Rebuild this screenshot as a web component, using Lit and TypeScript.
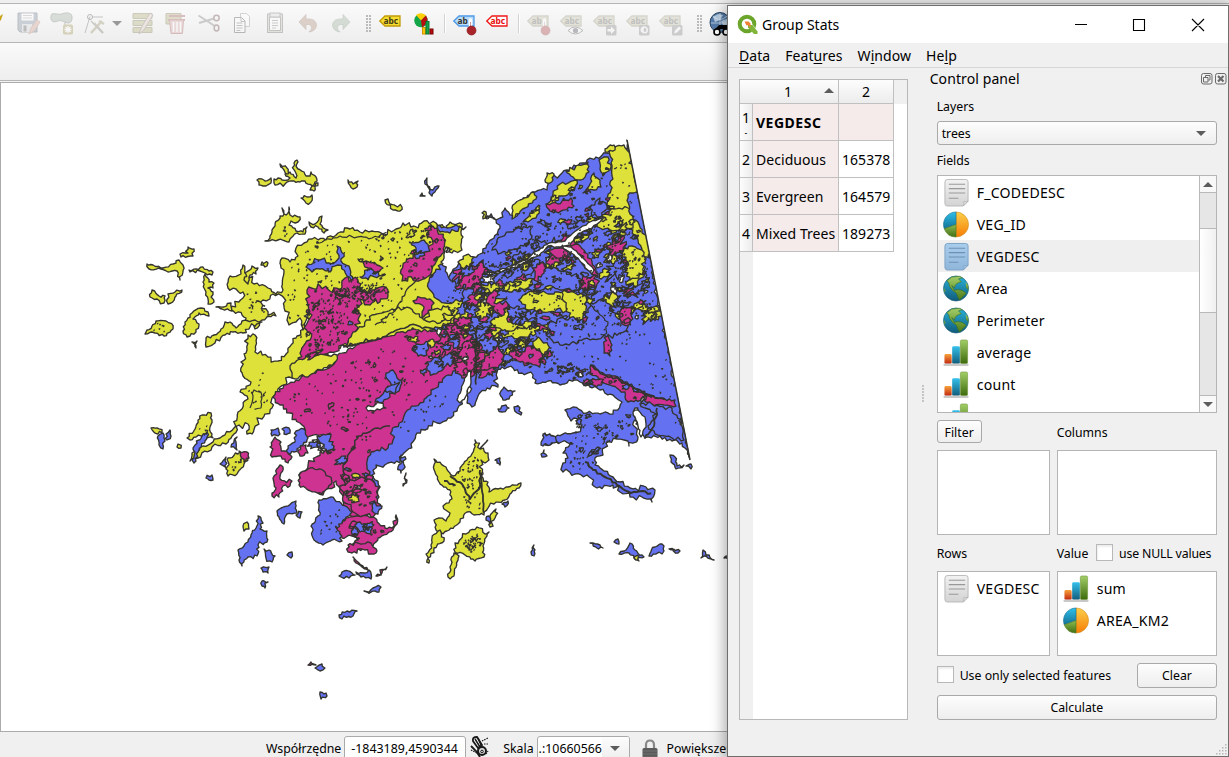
import { LitElement, html, svg, css } from "lit";
import { customElement } from "lit/decorators.js";

/* ---------- map geometry ---------- */
type Pt = [number, number];
const Y = "#dde139", B = "#6471f0", M = "#ce3391", W = "#ffffff";

function rng(seed: number) {
  let s = seed >>> 0;
  return () => {
    s = (s + 0x6d2b79f5) >>> 0;
    let t = s;
    t = Math.imul(t ^ (t >>> 15), t | 1);
    t ^= t + Math.imul(t ^ (t >>> 7), t | 61);
    return ((t ^ (t >>> 14)) >>> 0) / 4294967296;
  };
}
function pts(s: string): Pt[] {
  return s.trim().split(/\s+/).map((p) => p.split(",").map(Number) as Pt);
}
// Jagged coastline: every edge is split in short steps that wander off it.
function rough(s: string, amp = 2, step = 3, open = false): string {
  const p = pts(s);
  const r = rng(Math.round(p[0][0] * 31 + p[0][1] * 17 + p.length));
  const out: string[] = [];
  p.forEach((a, i) => {
    if (open && i === p.length - 1) return;
    const b = p[(i + 1) % p.length];
    const dx = b[0] - a[0], dy = b[1] - a[1];
    const len = Math.hypot(dx, dy) || 1;
    const n = Math.max(1, Math.round(len / step));
    for (let k = 0; k < n; k++) {
      const t = k / n + (k ? (r() - 0.5) * 0.5 / n : 0);
      const spike = r() < 0.14 ? 1.9 : 1;
      const j = k === 0 ? 0 : (r() - 0.5) * 2 * amp * spike;
      out.push(`${(a[0] + dx * t - (dy / len) * j).toFixed(1)},${(a[1] + dy * t + (dx / len) * j).toFixed(1)}`);
    }
  });
  return "M" + out.join("L") + (open ? "" : "Z");
}
function inside(x: number, y: number, p: Pt[]) {
  let c = false;
  for (let i = 0, j = p.length - 1; i < p.length; j = i++) {
    if (p[i][1] > y !== p[j][1] > y && x < ((p[j][0] - p[i][0]) * (y - p[i][1])) / (p[j][1] - p[i][1]) + p[i][0]) c = !c;
  }
  return c;
}
function blob(x: number, y: number, rx: number, ry: number, ang: number, r: () => number): string {
  const n = 7 + Math.floor(rx * 1.6);
  const ca = Math.cos(ang), sa = Math.sin(ang);
  const q: string[] = [];
  for (let i = 0; i < n; i++) {
    const a = (i / n) * Math.PI * 2, k = 0.4 + r() * 0.95;
    const u = Math.cos(a) * rx * k, v = Math.sin(a) * ry * k;
    q.push(`${(x + u * ca - v * sa).toFixed(1)},${(y + u * sa + v * ca).toFixed(1)}`);
  }
  return "M" + q.join("L") + "Z";
}
function bounds(p: Pt[]) {
  const xs = p.map((a) => a[0]), ys = p.map((a) => a[1]);
  return [Math.min(...xs), Math.max(...xs), Math.min(...ys), Math.max(...ys)];
}
function scatter(zone: string, count: number, colors: string, size: number, seed: number, flat = 0.42, tilt = -0.4) {
  const p = pts(zone), r = rng(seed);
  const [x0, x1, y0, y1] = bounds(p);
  const pal: Record<string, string> = { Y, B, M, W, N: "none" };
  const out = [];
  let guard = 0;
  while (out.length < count && guard++ < count * 30) {
    const x = x0 + r() * (x1 - x0), y = y0 + r() * (y1 - y0);
    if (!inside(x, y, p)) continue;
    const c = colors[Math.floor(r() * colors.length)];
    const sz = size * (0.3 + r() * r() * 1.6) * (c === "W" ? 0.6 : 1);
    out.push(svg`<path d=${blob(x, y, sz, sz * (flat + r() * 0.35), tilt + (r() - 0.5) * 1.3, r)} fill=${pal[c]}></path>`);
  }
  return out;
}
// Dark pinholes: tiny polygons that are mostly outline.
function specks(zone: string, count: number, seed: number) {
  const p = pts(zone), r = rng(seed);
  const [x0, x1, y0, y1] = bounds(p);
  let d = "";
  for (let i = 0; i < count; i++) {
    const x = x0 + r() * (x1 - x0), y = y0 + r() * (y1 - y0);
    if (inside(x, y, p)) d += `M${x.toFixed(1)},${y.toFixed(1)}l${(r() * 1.6).toFixed(1)},${(r() * 1.4 - 0.5).toFixed(1)}l-.6,.7z`;
  }
  return svg`<path d=${d} fill="#333" stroke-width="1.1"></path>`;
}

const YELLOW_MAIN =
  "296,248 304,243 312,239 326,240 338,233 347,228 360,232 372,231 384,235 396,229 403,223 414,226 424,221 436,223 447,229 450,222 462,224 463,237 462,250 452,253 446,247 441,262 448,285 462,300 470,318 445,328 420,325 380,338 345,346 312,352 337,356 334,363 318,371 302,376 289,377 280,387 272,398 272,408 262,419 257,418 252,434 247,434 248,424 239,425 234,434 226,444 212,447 198,458 190,461 192,453 203,446 220,438 234,428 238,412 248,399 240,392 251,382 243,376 241,362 247,350 248,335 255,335 255,352 268,357 278,361 288,352 296,338 303,329 310,320 309,310 303,330 300,318 289,325 285,311 284,298 273,294 263,300 258,301 268,315 276,316 262,320 255,329 246,318 238,312 231,310 243,298 243,292 228,288 230,276 241,274 243,265 247,274 254,284 268,288 276,294 283,290 284,272 281,268 282,258 290,262 298,256";
const BLUE_MAIN =
  "425,300 440,285 452,272 462,262 470,262 478,255 486,248 494,238 500,228 496,220 485,217 500,218 505,208 515,217 523,198 532,192 547,190 549,181 560,175 567,170 583,163 596,157 606,153 612,150 618,152 626,150 627,140 690,459 682,443 672,441 660,436 645,438 640,430 640,413 635,408 634,421 638,437 629,446 624,440 617,439 606,443 603,455 595,458 595,465 604,471 613,477 620,482 630,488 646,487 655,490 652,502 642,497 630,497 620,492 613,485 597,488 587,475 575,474 563,472 563,463 568,458 563,453 570,444 556,441 545,445 543,434 555,437 573,433 582,425 574,418 571,421 565,410 573,407 587,413 600,414 613,414 622,402 613,395 600,390 590,387 580,382 569,380 560,385 548,381 535,383 533,375 522,373 513,368 502,367 497,372 498,387 487,388 478,396 472,407 467,403 470,383 457,411 448,418 437,423 425,430 417,433 411,444 404,453 400,463 388,463 376,465 372,475 380,487 379,497 370,500 355,470 340,450 380,400 410,350";
const MAGENTA_MAIN =
  "273,397 280,405 290,413 300,423 308,437 324,436 330,433 326,445 320,452 306,470 299,475 302,484 312,489 323,495 336,481 343,500 351,516 360,517 371,512 378,508 373,498 376,490 370,472 367,466 371,452 377,450 388,448 393,440 392,431 399,423 410,409 420,403 436,388 448,375 461,370 471,377 480,362 492,354 480,344 466,341 446,337 434,331 410,325 383,336 350,348 337,356 332,366 310,374 296,380 284,385";
const NORTHWEST_MAGENTA =
  "307,290 318,284 330,291 342,287 345,278 358,280 362,292 372,290 385,287 383,297 370,305 360,300 358,320 354,332 348,345 330,352 318,355 305,360 298,358 310,340 306,325 312,315 308,305";

const PATCHES: [string, string][] = [
  [B, "306,267 318,260 334,263 339,258 337,246 344,254 341,261 350,269 353,280 347,276 338,265 330,272 320,269 312,272"],
  [M, "358,259 366,261 377,265 383,268 376,272 368,268"],
  [B, "360,277 367,270 378,271 382,276 368,279"],
  [M, "401,270 406,262 416,254 425,252 433,244 427,233 430,227 437,228 445,240 444,252 436,262 430,275 419,281 408,277 402,281"],
  [B, "411,243 424,240 430,251 422,255 416,248"],
  [B, "428,283 433,274 441,264 448,276 456,284 464,290 462,300 445,303 434,297"],
  [B, "437,226 447,228 456,225 466,227 450,233 440,232"],
  [M, "371,295 378,292 386,287 388,296 380,302 373,301"],
  [M, "413,301 425,298 434,303 425,315 417,320 424,307"],
  [Y, "345,346 353,332 362,327 372,315 392,309 410,308 424,320 442,312 455,310 450,324 430,330 400,332 372,340"],
  [Y, "307,356 326,355 337,355 334,363 316,371 308,377 292,378 290,366"],
  [Y, "610,149 624,145 629,152 641,200 648,230 650,258 642,254 638,240 628,226 616,214 607,205 611,190 612,168"],
  [Y, "599,160 608,157 610,170 603,176 600,169"],
  [Y, "566,171 578,165 588,162 589,172 581,180 571,176"],
  [Y, "547,204 553,194 560,184 577,180 574,190 562,196 553,205"],
  [Y, "594,173 600,180 601,187 594,190 583,193 590,184"],
  [Y, "512,208 520,200 529,196 534,192 536,199 525,208 516,214 512,219"],
  [Y, "523,222 530,213 539,209 536,218 528,222"],
  [B, "386,373 393,370 399,380 403,378 400,388 390,397 380,403 375,402 384,392 392,387"],
  [B, "412,350 417,344 429,342 427,355 418,356"],
  [B, "385,391 392,385 400,382 395,394"],
  [W, "366,408 381,403 386,408 377,409 368,411"],
  [W, "318,450 327,441 331,446 323,452"],
  [M, "340,486 352,480 368,479 379,487 376,497 380,508 371,517 358,515 345,503"],
];
// Larger pieces that sit on top of the small mosaic.
const OVER: [string, string][] = [
  [Y, "597,224 605,214 614,209 628,208 634,214 633,228 624,232 610,230 600,228"],
  [M, "546,204 558,204 565,200 571,198 574,206 561,211 550,211"],
  [B, "628,195 636,192 641,200 648,236 642,233 638,222 630,214"],
  [B, "497,240 510,232 530,226 532,236 524,246 512,250 498,254 492,250"],
  [B, "590,208 600,198 607,206 602,216 592,216"],
  [Y, "519,300 526,294 534,291 546,293 554,294 558,292 572,298 583,302 584,308 566,311 557,309 542,312 528,310"],
  [Y, "562,292 575,293 586,296 586,312 580,322 570,318 566,306"],
  [Y, "620,252 632,246 642,250 645,262 643,275 630,280 624,272 628,262"],
  [Y, "490,322 500,315 509,308 508,322 518,325 530,326 538,330 528,335 512,336 502,330"],
  [B, "525,276 540,268 556,268 570,274 582,280 578,290 560,290 548,286 532,292 524,286"],
  [B, "548,325 560,318 585,320 590,303 606,300 612,312 628,324 628,332 560,345 550,338"],
  [M, "566,245 578,244 584,250 592,262 598,277 588,270 574,252"],
  [M, "548,250 560,248 568,252 564,260 554,256"],
  [M, "486,302 494,290 498,295 494,303 508,304 504,315 496,312"],
  [M, "617,314 624,307 634,311 630,324 624,325"],
  [M, "455,287 463,277 474,272 482,262 487,268 480,282 466,290"],
  [M, "533,268 542,262 546,268 541,277 534,280"],
  [Y, "458,262 466,255 474,257 470,267 461,267"],
  [Y, "424,319 435,309 448,306 452,316 440,323"],
  [Y, "503,285 518,280 534,279 530,286 512,292 503,291"],
  [M, "480,368 490,352 500,343 503,358 498,368 485,370"],
  [M, "509,355 514,346 522,352 528,346 540,350 546,362 536,365 520,362"],
  [Y, "533,345 538,337 548,345 547,356 540,351"],
  [Y, "500,332 520,328 540,326 536,334 520,337 503,338"],
  [M, "454,368 458,358 462,345 470,340 477,352 472,370 462,378"],
  [B, "480,340 494,336 498,344 490,352 481,350"],
  [B, "427,362 440,356 444,368 434,374 427,370"],
  [M, "591,365 598,370 606,375 615,376 627,382 640,392 655,398 675,400 676,406 664,405 646,402 636,400 628,402 625,392 610,385 600,380 590,374"],
  [M, "604,345 608,336 612,345 610,356 604,353"],
  [B, "640,404 652,404 672,408 680,424 684,440 672,438 655,434 648,426 656,414"],
];

const ISLANDS: [string, string][] = [
  // north-west
  [Y, "257,180 262,179 265,181 271,178 271,183 266,186 263,186 259,185"],
  [Y, "280,164 287,168 290,174 286,174 284,170"],
  [Y, "274,179 278,178 282,180 290,178 285,174 290,172 296,178 294,163 297,160 298,169 304,172 306,176 310,176 311,172 316,177 317,181 312,186 305,181 300,182 294,181 285,184 275,185"],
  [Y, "310,190 312,186 318,183 314,191"],
  [Y, "301,198 307,197 312,195 311,202 306,203"],
  [Y, "348,180 353,184 358,181 357,187 353,189"],
  [Y, "385,200 388,199 390,204 396,206 402,207 400,211 393,210"],
  [Y, "420,196 422,193 425,196"],
  [B, "425,184 427,178 428,186 433,190 437,186 439,186 436,190 432,196 430,190"],
  [Y, "265,241 270,238 272,232 275,226 280,216 284,214 282,208 286,215 289,207 290,215 300,217 298,222 291,221 289,225 296,231 303,232 307,227 305,234 297,233 290,239 289,242 278,240"],
  [Y, "309,222 315,224 319,218 322,216 320,224 328,230 324,233 318,227 311,227"],
  [Y, "180,254 188,253 188,247 194,249 193,256 181,257"],
  [Y, "147,264 153,265 163,268 173,264 179,260 183,265 180,280 177,271 168,272 161,269 149,269"],
  [Y, "189,270 196,269 203,267 209,271 213,272 212,275 205,273 200,271 190,272"],
  [Y, "205,274 209,282 214,283 213,288 208,288 213,292 214,302 208,304 206,292 203,282"],
  [Y, "150,297 152,290 159,296 165,296 164,303 157,299"],
  [Y, "168,304 168,294 175,292 182,290 176,296 171,303"],
  [Y, "147,330 152,326 156,321 166,321 173,329 164,336 155,333 145,334"],
  [Y, "183,331 185,322 192,313 201,308 208,312 209,316 199,313 193,319 199,324 196,332 187,337"],
  [Y, "216,307 224,307 231,303 232,311 222,309"],
  [Y, "206,338 214,335 221,329 225,322 230,322 236,328 242,321 255,320 262,322 250,327 243,333 233,332 225,335 215,343 206,347"],
  [Y, "192,342 197,341 196,348"],
  [Y, "252,266 258,268 256,274 250,275 248,284 244,280"],
  [Y, "261,265 262,262 268,263 267,266"],
  // west coast
  [Y, "151,428 157,428 162,433 158,434"],
  [B, "158,436 163,433 165,441 163,449 159,445"],
  [B, "166,434 170,430 171,436 167,440"],
  [Y, "178,444 177,447 181,448"],
  [Y, "187,438 195,429 198,420 202,415 211,413 212,420 210,427 213,438 204,436 196,437 190,440"],
  [B, "192,460 195,445 202,436 207,432 205,441 199,450 194,463"],
  [Y, "226,469 228,458 240,452 248,458 244,464 237,474 228,476"],
  [B, "220,464 226,457 226,468"],
  [B, "231,447 237,437 237,450"],
  [B, "206,478 212,475 213,480 209,480"],
  [M, "239,451 247,452 249,458 244,462"],
  [B, "271,430 278,428 280,434 272,436"],
  [B, "282,429 289,428 290,433 284,434"],
  [B, "296,431 304,429 308,438 303,445 294,452 285,454 288,446 295,442"],
  [M, "270,447 275,437 281,442 281,448 292,457 288,463 281,456 272,457"],
  [M, "298,450 306,445 308,453 300,456"],
  [M, "273,478 280,465 283,467 280,479 292,481 290,486 283,486 279,497 272,496 276,488"],
  [M, "299,475 310,468 324,471 332,482 322,494 308,490 299,485"],
  [B, "317,436 328,434 334,446 328,454"],
  [B, "277,511 288,506 296,501 297,513 287,514 284,524 279,517"],
  [B, "296,515 302,512 300,518"],
  [B, "311,526 320,515 319,500 331,497 341,503 352,512 343,520 342,541 332,540 323,545 314,540"],
  [B, "246,543 252,533 256,528 258,516 261,518 260,529 267,531 267,542 258,545 257,556 248,557 242,566 239,560 238,550 244,546"],
  [Y, "243,526 247,522 249,529 244,531"],
  [B, "264,549 269,550 275,556 272,562 266,558"],
  [B, "261,568 269,567 268,573 263,572"],
  [B, "262,581 268,582 265,588 262,586"],
  [B, "287,555 292,552 291,558"],
  [M, "337,528 346,518 356,516 368,516 375,518 385,528 392,528 396,515 397,524 393,530 378,538 373,546 363,549 350,552 349,545 358,540 352,536 342,538"],
  [M, "348,545 358,543 371,543 377,551 371,554 360,549 352,553 348,552"],
  [B, "353,526 360,522 370,527 371,533 360,532"],
  [B, "373,503 382,506 378,514 372,511"],
  [M, "353,557 359,563 368,570 362,567 356,563"],
  [B, "339,576 344,571 352,573 355,575 349,578 341,577"],
  [B, "356,572 364,573 369,570 371,579 361,577"],
  [M, "376,576 387,567 382,573 378,576"],
  [B, "364,591 373,588 381,587 379,592 367,592"],
  [B, "339,615 347,611 357,611 353,616 342,619"],
  [M, "308,665 311,662 316,665"], [B, "315,668 322,664 325,668 320,671"],
  [B, "320,692 326,693 327,696 321,699"],
  [B, "398,467 402,462 401,455 406,459 401,473"],
  [B, "403,486 406,473 407,480"],
  // south island
  [Y, "434,459 446,467 453,476 460,468 467,460 474,449 475,440 480,449 488,453 489,460 485,463 481,460 483,478 488,482 489,492 498,489 508,487 521,483 519,488 510,494 505,500 494,504 488,508 484,515 474,515 467,512 460,522 447,531 438,532 434,520 439,518 446,521 450,513 443,506 452,499 450,490 439,482 435,472"],
  [Y, "432,538 440,530 444,541 434,548 429,563 427,560 431,545"],
  [Y, "455,543 466,534 477,527 485,534 489,532 483,546 484,557 475,561 465,555 455,552"],
  [Y, "454,553 459,556 454,576 448,577 450,567"],
  [Y, "489,520 496,509 495,518 490,527"],
  [B, "486,518 489,516 490,524"],
  [B, "502,504 508,501 505,507"],
  [B, "495,460 500,458 500,465 497,463"],
  [B, "501,391 504,387 508,391 515,391 509,399 503,400"],
  [B, "498,409 506,405 509,408 502,412"],
  [B, "514,407 520,408 521,415 517,413"],
  [B, "541,454 544,450 547,456 542,457"],
  [B, "541,445 545,433 553,436 559,443"],
  [B, "670,455 675,457 677,466 684,465 676,469 671,462"],
  [B, "686,466 691,464 691,469"],
  [B, "531,552 534,545 534,556"],
  [B, "590,543 600,545 603,548 597,548"],
  [B, "614,542 618,539 619,544"],
  [B, "619,554 626,550 630,543 635,550 644,557 636,560 629,553"],
  [Y, "634,557 638,555 639,561"],
  [B, "649,556 655,547 662,544 664,551"],
  [B, "669,549 680,551 678,553"],
  [B, "701,558 703,550 706,555 714,560"],
  [B, "724,558 729,556 729,560"],
  [Y, "545,180 547,173 554,174 553,180 547,183"],
  [Y, "482,213 486,212 487,219 483,219"],
  [Y, "605,149 608,147 614,145 615,150 608,152"],
];

const MOSAIC = "440,326 446,300 470,266 498,254 520,248 545,232 565,215 590,205 622,215 645,255 655,300 660,320 630,326 600,325 565,330 550,345 566,360 600,370 560,377 510,362 480,375 452,372";
const EAST_BODY = "505,222 530,205 565,182 620,155 645,260 682,430 640,400 580,375 510,360 460,370 450,310 470,268";

function path(c: string, d: string, amp = 1.6, step = 3) {
  return svg`<path d=${rough(d, amp, step)} fill=${c}></path>`;
}
function seam(d: string, w = 1.3, amp = 1.3) {
  return svg`<path d=${rough(d, amp, 3, true)} fill="none" stroke-width=${w}></path>`;
}
const mapArt = svg`
  <defs><clipPath id="tile"><path d="M0,83H615L627,139L691,463V731H0Z"></path></clipPath></defs>
  <g stroke="#34342f" stroke-width="1.35" stroke-linejoin="round">
    <g clip-path="url(#tile)">
      ${path(B, BLUE_MAIN, 2.1, 2.8)}
      ${path(Y, YELLOW_MAIN, 2, 2.8)}
      ${path(M, NORTHWEST_MAGENTA, 2.6, 2.8)}
      ${path(M, MAGENTA_MAIN, 2, 2.8)}
      ${PATCHES.map(([c, d]) => path(c, d, 1.7, 2.8))}
      ${scatter("450,370 440,330 470,300 500,305 540,315 600,322 590,330 545,335 550,360 500,362 480,372", 95, "MMMYBBYWN", 8, 11)}
      ${scatter("462,266 500,254 545,235 600,232 645,262 655,318 610,320 560,290 520,292 490,300 465,300", 120, "MBBYMYNBWY", 8, 23)}
      ${scatter("505,222 545,212 590,195 612,200 618,240 560,240 520,245", 34, "MBNNY", 5, 31)}
      ${OVER.map(([c, d]) => path(c, d, 1.8, 2.8))}
      ${scatter(MOSAIC, 130, "MBYWMNYM", 3.6, 37)}
      ${scatter("545,350 600,372 630,385 655,398 640,402 600,385 545,372", 26, "BMNWB", 3.8, 41)}
      ${scatter("410,328 450,332 480,345 470,370 440,380 415,375", 24, "BBNYW", 5, 47)}
      ${scatter("308,290 385,285 370,305 345,345 305,358", 36, "NNMWBY", 3.2, 53)}
      ${scatter("430,225 446,235 452,250 430,280 405,280 405,262", 20, "NWMB", 3.4, 59)}
      ${scatter("285,262 304,245 350,232 420,226 460,230 425,260 400,300 320,280", 14, "NWY", 3, 61)}
      ${scatter("290,395 330,370 420,330 440,350 400,410 340,440", 24, "NNWM", 2.6, 67)}
      ${scatter("340,450 370,440 375,480 378,510 345,500", 18, "NMBWY", 3.5, 71)}
      ${scatter("302,440 330,434 340,455 315,455", 12, "YBMW", 4, 73)}
      ${scatter("572,415 620,418 640,405 640,440 600,450 570,465", 20, "NBN", 3, 79)}
      ${scatter("600,205 645,212 645,270 610,232", 14, "NNYBW", 4, 83)}
      ${scatter("520,212 600,170 612,158 614,200 560,215", 18, "NBYM", 3.5, 89)}
      ${path(W, "485,274 497,271 510,266 525,260 540,249 549,243 565,241 570,236 580,228 590,222 604,218 592,228 578,234 570,245 560,247 548,246 541,253 524,263 510,269 498,274", 0.8)}
      ${path(W, "562,246 571,247 583,258 594,270 592,274 578,258", 0.6)}
      ${path(W, "470,370 471,383 466,396 460,403 457,400 463,384", 1.3)}
      ${path(W, "638,410 645,417 646,427 641,437 636,420 633,412", 1)}
      ${seam("585,462 593,470 605,477 617,485 631,493 643,491 653,496", 2)}
      ${seam("476,328 476,388", 1.7, 0.5)}
      ${seam("657,408 654,426 642,441", 1.8, 0.7)}
      ${seam("590,365 605,375 625,383 647,394 667,400", 1.8, 1.2)}
      ${seam("343,347 383,337 410,325 440,331", 1.6)}
      ${seam("345,486 343,466 352,450 358,436 372,430 392,425", 1.5)}
      ${seam("375,325 395,311 409,287 420,275", 1.3)}
      ${seam("590,305 598,312 608,322 604,335 598,332", 1.2)}
      ${seam("316,243 340,236 372,238 390,232", 1.2)}
      ${seam("250,408 254,390 262,396 261,408 252,410", 1.2)}
      ${specks("288,272 304,248 350,236 440,228 445,255 400,320 300,340 286,320", 240, 101)}
      ${specks("282,395 330,370 420,332 460,350 440,385 400,410 370,450 330,432 300,418", 230, 103)}
      ${specks(MOSAIC, 520, 107)}
      ${specks(EAST_BODY, 380, 109)}
      ${specks("330,290 380,282 368,300 340,298", 200, 113)}
      ${specks("480,272 500,262 530,252 545,245 540,255 510,272 490,280", 300, 127)}
      ${specks("575,424 620,420 630,416 622,436 600,445 590,470 568,468 574,450", 130, 131)}
      ${specks("612,155 625,152 648,255 612,240", 30, 137)}
      ${specks("312,300 350,295 340,345 312,352", 130, 139)}
      ${specks("385,450 400,420 450,385 466,376 455,402 410,430", 60, 149)}
    </g>
    <path d="M627,140L690,460" fill="none" stroke-width="1.5"></path>
    ${ISLANDS.map(([c, d]) => path(c, d, 1.4, 2.4))}
    ${scatter("342,524 372,520 384,532 360,542", 14, "NBMM", 3, 151)}
    ${scatter("344,490 370,482 374,506 355,512", 14, "NBWM", 3.2, 157)}
    ${seam("450,476 462,484 470,499 480,487 481,469", 2, 0.8)}
    ${seam("480,470 483,495 484,515", 1.8, 0.6)}
    ${seam("444,481 455,485 450,487", 1.8)}
    ${seam("480,449 490,437", 1.6, 0.5)}
    ${specks("458,472 478,454 481,510 466,508", 70, 163)}
    ${specks("462,542 478,533 482,544 470,553", 110, 167)}
    ${specks("320,520 340,507 338,536 320,536", 16, 173)}
    ${specks("248,385 266,364 268,400 252,412", 24, 179)}
    ${specks("244,290 262,292 264,312 248,312", 22, 181)}
    ${specks("276,236 282,222 290,236", 14, 183)}
    ${specks("230,470 234,458 243,458 236,470", 16, 187)}
    ${specks("150,330 158,323 166,325 164,332", 10, 191)}
    ${specks("196,434 203,420 209,424 206,434", 10, 193)}
  </g>`;

/* ---------- icons ---------- */
const doc = (sel = false) => svg`
  <svg class="ic" viewBox="0 0 28 30">
    <defs><linearGradient id=${sel ? "dgs" : "dg"} x2="0" y2="1"><stop offset="0" stop-color=${sel ? "#a9cdec" : "#f2f2f2"}></stop><stop offset="1" stop-color=${sel ? "#8fb6da" : "#d3d3d3"}></stop></linearGradient></defs>
    <path d="M5,1.500H23.500Q26,1.500 26,4V24L21,29H4.500Q2,29 2,26.500V4Q2,1.500 5,1.500Z" fill=${sel ? "url(#dgs)" : "url(#dg)"} stroke=${sel ? "#7da2c6" : "#b9b9b9"}></path>
    <path d="M26,24L21,29Q22.500,27 21.500,24.500Q24,25.200 26,24Z" fill=${sel ? "#a9cdec" : "#efefef"} stroke=${sel ? "#7da2c6" : "#adadad"} stroke-width=".8"></path>
    <path d="M6,6.500H23M6,11H23M6,15.500H23M6,21H16" stroke=${sel ? "#6d91b4" : "#999"} stroke-width="1.100"></path>
  </svg>`;
const pie = svg`
  <svg class="ic" viewBox="0 0 28 30">
    <defs>
      <linearGradient id="po" x2="0" y2="1"><stop offset="0" stop-color="#fcd04b"></stop><stop offset="1" stop-color="#f67d04"></stop></linearGradient>
      <linearGradient id="pb" x2="0" y2="1"><stop offset="0" stop-color="#2cc0ea"></stop><stop offset="1" stop-color="#157096"></stop></linearGradient>
      <linearGradient id="pg" x2="0" y2="1"><stop offset="0" stop-color="#8dbc50"></stop><stop offset="1" stop-color="#416e12"></stop></linearGradient>
    </defs>
    <path d="M13.500,15V2A13,13 0 0 1 13.500,28Z" fill="url(#po)" stroke="#cf8a22" stroke-width=".6"></path>
    <path d="M13.500,15L1.300,19.500A13,13 0 0 1 13.500,2Z" fill="url(#pb)" stroke="#1b6f93" stroke-width=".6"></path>
    <path d="M13.500,15V28A13,13 0 0 1 1.300,19.500Z" fill="url(#pg)" stroke="#4c7a1e" stroke-width=".6"></path>
  </svg>`;
const globe = svg`
  <svg class="ic" viewBox="0 0 28 30">
    <defs>
      <linearGradient id="gb" x2="0" y2="1"><stop offset="0" stop-color="#29b3dc"></stop><stop offset="1" stop-color="#105a78"></stop></linearGradient>
      <linearGradient id="gg" x2="0" y2="1"><stop offset="0" stop-color="#a3cf69"></stop><stop offset="1" stop-color="#4a7a17"></stop></linearGradient>
    </defs>
    <circle cx="13.500" cy="15" r="13" fill="url(#gb)" stroke="#19607d" stroke-width=".7"></circle>
    <path d="M4,7L9,3.200L17,2.300L20,4L16,5L19,8L16,9L13,11L12,14L9,12L12,17L15,16L20,17L24,20L20,24L17,27L15.500,24L14,20L10,17L7,13L6,9Z" fill="url(#gg)" stroke="#3e6b18" stroke-width=".6"></path>
    <path d="M23.500,8L26,12L26.500,17L24,14Z" fill="url(#gg)"></path><path d="M.8,14L2.600,17L1.800,20Z" fill="#6f9f38"></path>
  </svg>`;
const bars = svg`
  <svg class="ic" viewBox="0 0 28 30">
    <defs>
      <linearGradient id="br" x2="0" y2="1"><stop offset="0" stop-color="#f9a33c"></stop><stop offset="1" stop-color="#c22a10"></stop></linearGradient>
      <linearGradient id="bb" x2="0" y2="1"><stop offset="0" stop-color="#35c1ec"></stop><stop offset="1" stop-color="#125d7c"></stop></linearGradient>
      <linearGradient id="bg" x2="0" y2="1"><stop offset="0" stop-color="#a2cf66"></stop><stop offset="1" stop-color="#3d6b0d"></stop></linearGradient>
    </defs>
    <rect x=".5" y="26.500" width="26" height="2.500" rx="1" fill="#c9c9c9"></rect>
    <rect x="1.500" y="16.500" width="7.500" height="10" rx="1.500" fill="url(#br)"></rect>
    <rect x="9.500" y="8.500" width="8" height="18" rx="1.500" fill="url(#bb)"></rect>
    <rect x="18" y="2" width="7.500" height="24.500" rx="1.500" fill="url(#bg)" stroke="#6f963b" stroke-width=".6"></rect>
  </svg>`;

const tag = (txt: string, fill: string, line: string, ink: string) => svg`
  <path d="M.8,9L6,4H21V14H6Z" fill=${fill} stroke=${line} stroke-width="1.300"></path>
  <text x="4.400" y="11.900" font-size="8.400" font-weight="700" font-family="Noto Sans, sans-serif" fill=${ink}>${txt}</text>`;
const thermo = svg`<path d="M17.500,8V18" stroke="#fff" stroke-width="3.400" stroke-linecap="round"></path><path d="M17.500,10V18" stroke="#c99" stroke-width="1"></path><circle cx="18.500" cy="18.500" r="4.500" fill="#a8242a" stroke="#861c20" stroke-width=".7"></circle>`;
const box = (inner: unknown) => svg`<rect x="13" y="13" width="10.500" height="10.500" rx="1.500" fill="#777"></rect>${inner}`;
const t = (inner: unknown, cls = "ti") => html`<svg class=${cls} viewBox="0 0 24 24" fill="none">${inner}</svg>`;

const TOOLS = {
  save: svg`<path d="M1,1H20V20H3L1,18Z" fill="#8794a5" stroke="#5d6875"></path><rect x="4.500" y="1.500" width="12" height="7" fill="#fff"></rect><path d="M6,3.500h9M6,6h9" stroke="#aaa"></path><rect x="5" y="12" width="10" height="8" fill="#d3d7da"></rect><rect x="6.500" y="13.500" width="3" height="6" fill="#666"></rect><path d="M12,22l2,-6l6,-8l3,2l-6,9Z" fill="#d8a595" stroke="#b78b7c"></path>`,
  poly: svg`<path d="M1,7Q0,0 6,2Q11,3 15,1Q23,0 22,7Q21,13 15,10Q10,7 6,9.500Q2,11 1,7Z" fill="#a9b5aa" stroke="#7b877c"></path><path d="M15,10v4" stroke="#777"></path><rect x="13" y="12.500" width="10" height="10" rx="1.500" fill="#a99f63"></rect><path d="M18,14v7M14.500,17.500h7M15.500,15l5,5M20.500,15l-5,5" stroke="#fff" stroke-width="1.300"></path>`,
  vertex: svg`<path d="M7,4.500L2,21M9,5H20" stroke="#777"></path><circle cx="7" cy="5" r="2.500" stroke="#555"></circle><path d="M8,21L19,9M11,11l9,10M16,9l5,3" stroke="#a39c76" stroke-width="2.500"></path><path d="M8,9l12,12" stroke="#888" stroke-width="1.500"></path>`,
  table: svg`<path d="M1,1.500H20V6.500H1ZM1,8.500H20V13.500H1ZM1,15.500H20V20.500H1Z" fill="#b6b47f" stroke="#87855d"></path><path d="M7,22l2,-6l9,-15l3,2l-9,15Z" fill="#ddcbc3" stroke="#907e74"></path>`,
  trash: svg`<path d="M1,1.500H16V12H1Z" fill="#b6b47f" stroke="#87855d"></path><path d="M4,4H20M3,8H20" stroke="#a66" stroke-width="2"></path><path d="M4.500,8H18.500L17.500,21.500H6Z" fill="#d9acac" stroke="#a66"></path><path d="M8.500,10v10M12,10v10M15.500,10v10" stroke="#fff" stroke-width="1.500"></path>`,
  cut: svg`<path d="M0.500,3.500L16,13.500M1,11L16,6.500" stroke="#888" stroke-width="2"></path><circle cx="18.500" cy="6" r="2.700" stroke="#755" stroke-width="1.500"></circle><ellipse cx="18.500" cy="16" rx="2.300" ry="3" stroke="#755" stroke-width="1.500"></ellipse>`,
  copy: svg`<path d="M9.500,1.500h6l3,3v10h-9Z" fill="#fff" stroke="#999"></path><path d="M3.500,5.500h7l3.500,3.500v11.500h-10.500Z" fill="#fff" stroke="#555"></path><path d="M10,5.500v4h4M5.500,11h6M5.500,13.500h6M5.500,16h6M5.500,18.500h4" stroke="#777"></path>`,
  paste: svg`<rect x="3.500" y="2" width="15" height="18.500" fill="#cfcbb6" stroke="#777"></rect><path d="M5.500,5h11v13.500h-11Z" fill="#fff" stroke="#777"></path><rect x="6" y="1" width="10" height="4" fill="#ddd" stroke="#777"></rect><path d="M8,8.500h6M8,11h6M8,13.500h6M8,16h4" stroke="#888"></path>`,
  undo: svg`<path d="M2,10L9,2.500V7Q19,6 19.500,13Q19,19 12,20Q16,17 14,13.500Q12,12 9,12.500V17.500Z" fill="#b59684" stroke="#93776a" stroke-width=".7"></path>`,
  redo: svg`<path d="M20,10L13,2.500V7Q3,6 2.500,13Q3,19 10,20Q6,17 8,13.500Q10,12 13,12.500V17.500Z" fill="#a3b5a2" stroke="#7b917b" stroke-width=".7"></path>`,
  charts: svg`<circle cx="9" cy="8.500" r="6.800" fill="#12a54a"></circle><path d="M9,8.500L4,3Q9,-.5 14,3.500Z" fill="#ffce05"></path><path d="M9,8.500L14,3.500Q18,9.500 10,15.500Z" fill="#b90d10"></path><rect x="10.500" y="15.500" width="3" height="6.500" fill="#f8c808" stroke="#d48f00"></rect><rect x="14" y="9.500" width="3" height="12.500" fill="#12a54a" stroke="#0a7434"></rect><rect x="18" y="17" width="3" height="5" fill="#b90d10" stroke="#790000"></rect>`,
};
const grey = (x: string) => tag(x, "#bcb998", "#908e76", "#444");

type Icon = "doc" | "docsel" | "pie" | "globe" | "bars";
const ICONS: Record<Icon, unknown> = { doc: doc(), docsel: doc(true), pie, globe, bars };
const item = (icon: Icon, label: string) => html`
  <div class="item ${icon === "docsel" ? "sel" : ""}">${ICONS[icon]}<span>${label}</span></div>`;

@customElement("app-root")
export class AppRoot extends LitElement {
  static styles = css`
    :host { display: block; width: 1229px; height: 757px; position: relative; overflow: hidden; background: #f0f0f0; color: #000;
      font: 12.3px/16px "Noto Sans", "Open Sans", sans-serif; }
    * { box-sizing: border-box; }
    svg { display: block; flex: none; }
    .main { display: flex; flex-direction: column; height: 757px; }
    .menuedge { height: 4px; border-bottom: 1px solid #b5b5b5; background: #efefef; }
    .bar { height: 39px; border-bottom: 1px solid #b5b5b5; background: linear-gradient(#fafafa, #eeeeee); display: flex; align-items: center; gap: 9px; padding: 1px 0 0 17px; overflow: hidden; }
    .pencil { width: 4px; height: 8px; margin: -12px 4px 0 -17px; }
    .bar.second { height: 38px; }
    .ti { width: 24px; height: 24px; }
    .off { width: 24px; height: 24px; opacity: .38; }
    .pale { opacity: .3; }
    .tri { width: 0; height: 0; border: 5px solid transparent; border-top-color: #999; border-bottom: 0; margin: 0 1px 0 -4px; flex: none; }
    .grip { width: 5px; height: 18px; flex: none; background-image: radial-gradient(circle at 1px 1px, #bbb 0.8px, transparent 1px); background-size: 3px 3px; margin: 0 -1px 0 3px; }
    .grip.last { margin: 0 -2px 0 5px; }
    .sep { width: 2px; height: 19px; background: #d2d2d2; border-right: 1px solid #fff; margin: 0 -2px 0 -1px; flex: none; }
    .gap { height: 1px; background: #f4f4f4; }
    .map { flex: 1; border: 1px solid #ababab; background: #fff; min-height: 0; overflow: hidden; }
    .status { height: 25px; display: flex; align-items: flex-start; padding: 4px 0 0 266px; white-space: nowrap; overflow: hidden; }
    .status .lab { padding-top: 5px; }
    .edit { height: 26px; border: 1px solid #aaa; border-radius: 3px; background: #fff; padding: 4px 6px; margin-left: 3px; width: 122px; font-size: 12.400px; }
    .compass { margin-left: 4px; }
    .scale { margin-left: 13px; }
    .lock { margin: 3px 0 0 12px; }
    .zoomlab { margin-left: 9px; }
    .combo2 { height: 26px; width: 93px; border: 1px solid #aaa; border-radius: 3px; background: #fff; display: flex; margin-left: 3px; padding: 4px 0 0 1px; font-size: 12.400px; overflow: hidden; }
    .combo2 i { width: 27px; margin-top: -4px; height: 26px; margin-left: auto; background: linear-gradient(#fcfcfc, #ececec); display: flex; justify-content: center; padding-top: 9px; }
    .dn { width: 0; height: 0; border: 5px solid transparent; border-top: 5px solid #5c5c5c; border-bottom: 0; }
    .up { width: 0; height: 0; border: 5px solid transparent; border-bottom: 5px solid #5c5c5c; border-top: 0; }

    .win { position: absolute; left: 727px; top: 5px; width: 502px; height: 752px; border: 1px solid #6e6e6e; background: #f0f0f0; box-shadow: 0 2px 14px 2px rgba(0,0,0,.36); display: flex; flex-direction: column; font-size: 14px; line-height: 20px; }
    .title { height: 37px; background: #fff; display: flex; align-items: center; padding-left: 9px; }
    .title .t { margin-left: 4px; letter-spacing: -.02px; flex: 1; }
    .title .ctl { margin-right: 23px; }
    .menus { height: 25px; border-bottom: 1px solid #d6d6d6; display: flex; gap: 15px; padding: 3px 0 0 11px; letter-spacing: .06px; }
    .menus u { text-decoration-thickness: 1px; text-underline-offset: 2px; }
    .body { flex: 1; display: flex; min-height: 0; }
    .table { width: 169px; height: 641px; margin: 11px 0 0 11px; border: 1px solid #b8b8b8; background: #fff; display: grid; grid-template-columns: 13px 86px 55px 1fr; grid-template-rows: 24px repeat(4, 37px) 1fr; }
    .table > div { border-right: 1px solid #c0c0c0; border-bottom: 1px solid #c0c0c0; display: flex; align-items: center; padding: 2px 0 0 3px; white-space: nowrap; letter-spacing: .05px; }
    .table .h { background: linear-gradient(#fdfdfd, #ececec); justify-content: center; padding: 1px 0 0; }
    .table .h1 { grid-column: span 2; position: relative; padding-right: 2px; }
    .table .h1 .up { position: absolute; right: 4px; top: 8px; }
    .table .e { background: #f0f0f0; border: 0; }
    .table .b { border: 0; }
    .table .r { background: linear-gradient(90deg, #fdfdfd, #ececec); padding: 2px 0 0; justify-content: center; }
    .table .r.first { flex-direction: column; justify-content: flex-start; padding-top: 6px; line-height: 16px; }
    .table .r.first small { font-size: 7px; line-height: 13px; font-weight: 700; }
    .table .p { background: #f5ebeb; }
    .table .bold { font-weight: 700; letter-spacing: .5px; }
    .split { width: 15px; margin-left: 7px; display: flex; align-items: center; justify-content: center; }
    .split i { width: 2px; height: 17px; margin: 0 -2px 37px 0; background-image: radial-gradient(circle at 1px 1px, #c4c4c4 .8px, transparent 1px); background-size: 3px 3px; }
    .panel { width: 299px; display: flex; flex-direction: column; padding: 1px 1px 0 0; }
    .phead { height: 20px; display: flex; align-items: center; }
    .phead span { flex: 1; letter-spacing: .1px; }
    .form { padding: 8px 10px 0 7px; font-size: 12.300px; line-height: 16px; display: flex; flex-direction: column; }
    .lab2 { height: 24px; display: flex; align-items: center; padding-bottom: 5px; }
    .combo { height: 24px; border: 1px solid #a9a9a9; border-radius: 3px; background: linear-gradient(#fdfdfd, #eeeeee); display: flex; align-items: center; justify-content: space-between; padding: 2px 10px 0 4px; }
    .combo i { margin-top: -2px; }
    .lab3 { height: 30px; display: flex; align-items: center; padding-top: 2px; }
    .list { border: 1px solid #b5b5b5; background: #fff; overflow: hidden; font-size: 14.100px; }
    .fields { height: 238px; display: flex; }
    .items { flex: 1; }
    .item { height: 32px; display: flex; align-items: center; gap: 7px; padding-left: 5px; white-space: nowrap; letter-spacing: .25px; }
    .item span { padding-top: 1px; }
    .item.sel { background: #efefef; }
    .ic { width: 27px; height: 29px; }
    .scroll { width: 17px; border-left: 1px solid #b9b9b9; background: #e6e6e6; display: grid; grid-template-rows: 17px 35px 85px 1fr 17px; }
    .scroll .sb { background: #f8f8f8; display: flex; align-items: center; justify-content: center; }
    .scroll .sb.a { border-bottom: 1px solid #b9b9b9; } .scroll .sb.z { border-top: 1px solid #b9b9b9; }
    .scroll .thumb { background: linear-gradient(90deg, #fff, #f0f0f0); border: solid #b9b9b9; border-width: 1px 0; }
    .btn { border: 1px solid #a9a9a9; border-radius: 3px; background: linear-gradient(#fdfdfd, #eeeeee); display: flex; align-items: center; justify-content: center; height: 25px; padding-top: 1px; }
    .two { display: grid; grid-template-columns: 113px 160px; column-gap: 7px; }
    .two.l1 { margin-top: 7px; height: 23px; align-items: center; }
    .two.l1 > span { padding-top: 2px; }
    .filter { width: 45px; height: 23px; padding-top: 2px; }
    .two.l2 { margin-top: 7px; height: 85px; }
    .two.l3 { height: 36px; align-items: center; }
    .two.l3 span { padding-top: 2px; }
    .two.l4 { height: 85px; }
    .val { display: flex; align-items: center; gap: 7px; white-space: nowrap; }
    .val .nul { letter-spacing: -.16px; margin-left: -1px; }
    .val .chk { margin: -2px 0 0 .6px; }
    .chk { width: 17px; height: 17px; border: 1px solid #b8b8b8; background: #fff; box-shadow: inset 1px 2px 2px #eee; flex: none; }
    .only { display: flex; align-items: center; gap: 6px; height: 25px; margin-top: 7px; }
    .only .btn { width: 80px; margin-left: auto; }
    .only .chk { margin-top: -2px; }
    .calc { margin-top: 7px; }
    .sg { margin: auto 0 1px auto; }
  `;

  render() {
    return html`
      <div class="main">
        <div class="menuedge"></div>
        <div class="bar">
          <svg class="pencil" viewBox="0 0 4 8"><path d="M0,2L3,0L1,6L0,7Z" fill="#c8a41b"></path></svg>
          ${t(TOOLS.save, "off")}${t(TOOLS.poly, "off")}${t(TOOLS.vertex, "off")}
          <span class="tri"></span>
          ${t(TOOLS.table, "off")}${t(TOOLS.trash, "off")}${t(TOOLS.cut, "off")}${t(TOOLS.copy, "off")}${t(TOOLS.paste, "off")}${t(TOOLS.undo, "off")}${t(TOOLS.redo, "off")}
          <span class="grip"></span>
          ${t(tag("abc", "#f7dc32", "#c09b08", "#443b12"))}${t(TOOLS.charts)}
          <span class="sep"></span>
          ${t(svg`${tag("ab", "#b9dcfa", "#4e99e8", "#333")}${thermo}`)}
          ${t(tag("abc", "#fff", "#f01818", "#e80c0c"))}
          <span class="sep"></span>
          ${t(svg`${grey("ab")}${thermo}`, "off pale")}
          ${t(svg`${grey("abc")}<path d="M8,18.500Q15,11.500 23,18.500Q15,25.500 8,18.500Z" fill="#fff" stroke="#444"></path><circle cx="15.500" cy="18.500" r="2.600" fill="#334"></circle>`, "off pale")}
          ${t(svg`${grey("abc")}${box(svg`<path d="M14.500,17h3.500v-2.500l4,3.700l-4,3.700v-2.500h-3.500Z" fill="#fff"></path>`)}`, "off pale")}
          ${t(svg`${grey("abc")}${box(svg`<path d="M16,20a3,3 0 1 1 3.500,.8M17,15.500v5h4" stroke="#fff" stroke-width="1.500"></path>`)}`, "off pale")}
          ${t(svg`${grey("abc")}${box(svg`<path d="M15,21.500l1,-3l4,-4l2,2l-4,4Z" fill="#fff"></path>`)}`, "off pale")}
          <span class="grip last"></span>
          ${t(svg`<circle cx="11" cy="10.500" r="10" fill="#547aa8" stroke="#26405f"></circle><path d="M4,5l5,-3l5,1l-3,5l-5,2ZM12,9l6,-2l2,5l-4,5Z" fill="#b7cce2"></path><path d="M2,11h18M11,1v19M4,4q7,7 14,0" stroke="#dce8f3" stroke-width=".7"></path><path d="M6,20l5,-5h9l4,5" stroke="#000" stroke-width="4"></path><circle cx="8" cy="20" r="3" fill="#fff" stroke="#000" stroke-width="1.600"></circle><circle cx="17" cy="20" r="3" fill="#fff" stroke="#000" stroke-width="1.600"></circle>`)}
        </div>
        <div class="bar second"></div>
        <div class="gap"></div>
        <div class="map"><svg width="727" height="648" viewBox="1 83 727 648">${mapArt}</svg></div>
        <div class="status">
          <span class="lab">Współrzędne</span>
          <span class="edit">-1843189,4590344</span>
          <svg class="compass" width="20" height="22" viewBox="0 0 20 22" fill="none" stroke="#1a1a1a"><path d="M3,5Q2,1 7,1L12,9L8,12Z" fill="#fff" stroke-width="1.800"></path><path d="M5,3l5,8M8,2l3,7" stroke-width="1.500"></path><circle cx="12" cy="15" r="4" fill="#ddd" stroke-width="2"></circle><circle cx="12" cy="15.500" r="1.300"></circle><path d="M1,10l5,5l4,6" stroke-width="1.800"></path><path d="M12,5l6,-3M14,8l4,0M16,18l2,-3M1,14l6,3" stroke-width="1.200" stroke-dasharray="1.500 1"></path></svg>
          <span class="lab scale">Skala</span>
          <span class="combo2">.:10660566<i><b class="dn"></b></i></span>
          <svg class="lock" width="16" height="22" viewBox="0 0 16 22"><path d="M4,10V6Q4,1.500 8,1.500Q12,1.500 12,6V10" fill="none" stroke="#888" stroke-width="2.200"></path><rect x=".5" y="9" width="15" height="13" rx="1.500" fill="#5b5b5b"></rect><path d="M1,12h14M1,15h14M1,18h14" stroke="#727272"></path></svg>
          <span class="lab zoomlab">Powiększenie</span>
        </div>
      </div>

      <div class="win">
        <div class="title">
          <svg width="21" height="21" viewBox="0 0 21 21"><circle cx="10" cy="10" r="7.300" fill="none" stroke="#6ca52b" stroke-width="4"></circle><path d="M10,10h5l6,7v3.500h-4Z" fill="#fff"></path><path d="M11,11h4.500l5,6.500v2.500h-3.500l-6,-6.500Z" fill="#80b53a"></path><path d="M7.500,7.500h4l2,2v4l-2.500,-2.300l-1.500,.3Z" fill="#ef8034"></path></svg>
          <span class="t">Group Stats</span>
          <svg class="ctl" width="132" height="14" viewBox="0 0 132 14" fill="none" stroke="#000" stroke-width="1.100"><path d="M2,6.500H14M60.500,1.500h11v11h-11ZM119,1l12,12M131,1l-12,12"></path></svg>
        </div>
        <div class="menus"><span><u>D</u>ata</span><span>Feat<u>u</u>res</span><span>W<u>i</u>ndow</span><span>He<u>l</u>p</span></div>
        <div class="body">
          <div class="table">
            <div class="h h1">1<span class="up"></span></div><div class="h">2</div><div class="e"></div>
            <div class="r first"><span>1</span><small>-</small></div><div class="p bold">VEGDESC</div><div class="p"></div><div class="b"></div>
            <div class="r">2</div><div class="p">Deciduous</div><div>165378</div><div class="b"></div>
            <div class="r">3</div><div class="p">Evergreen</div><div>164579</div><div class="b"></div>
            <div class="r">4</div><div class="p">Mixed Trees</div><div>189273</div><div class="b"></div>
            <div class="e"></div><div class="b"></div><div class="b"></div><div class="b"></div>
          </div>
          <div class="split"><i></i></div>
          <div class="panel">
            <div class="phead"><span>Control panel</span>
              <svg width="26" height="12" viewBox="0 0 26 12" fill="none" stroke="#6a6a6a"><rect x=".5" y=".5" width="10.500" height="10.500" rx="2"></rect><path d="M4.500,4V2.500h4.500v4.500h-1.500M2.500,4.500h4.500v4.500h-4.500Z"></path><rect x="14.500" y=".5" width="10.500" height="10.500" rx="2"></rect><path d="M17,3l5.500,5.500M22.500,3l-5.500,5.500" stroke-width="2.200"></path></svg>
            </div>
            <div class="form">
              <div class="lab2">Layers</div>
              <div class="combo"><span>trees</span><i class="dn"></i></div>
              <div class="lab3">Fields</div>
              <div class="list fields">
                <div class="items">
                  ${item("doc", "F_CODEDESC")}${item("pie", "VEG_ID")}${item("docsel", "VEGDESC")}${item("globe", "Area")}${item("globe", "Perimeter")}${item("bars", "average")}${item("bars", "count")}${item("bars", "")}
                </div>
                <div class="scroll"><div class="sb a"><i class="up"></i></div><div></div><div class="thumb"></div><div></div><div class="sb z"><i class="dn"></i></div></div>
              </div>
              <div class="two l1"><div class="btn filter">Filter</div><span>Columns</span></div>
              <div class="two l2"><div class="list"></div><div class="list"></div></div>
              <div class="two l3"><span>Rows</span><div class="val"><span>Value</span><i class="chk"></i><span class="nul">use NULL values</span></div></div>
              <div class="two l4"><div class="list">${item("doc", "VEGDESC")}</div><div class="list">${item("bars", "sum")}${item("pie", "AREA_KM2")}</div></div>
              <div class="only"><i class="chk"></i><span>Use only selected features</span><div class="btn">Clear</div></div>
              <div class="btn calc">Calculate</div>
            </div>
            <svg class="sg" width="11" height="11" viewBox="0 0 11 11" fill="#b8b8b8"><path d="M9,0h1.500v1.500h-1.500ZM9,3h1.500v1.500h-1.500ZM6,3h1.500v1.500h-1.500ZM9,6h1.500v1.500h-1.500ZM6,6h1.500v1.500h-1.500ZM3,6h1.500v1.500h-1.500ZM9,9h1.500v1.500h-1.500ZM6,9h1.500v1.500h-1.500ZM3,9h1.500v1.500h-1.500ZM0,9h1.500v1.500h-1.500Z"></path></svg>
          </div>
        </div>
      </div>`;
  }
}
